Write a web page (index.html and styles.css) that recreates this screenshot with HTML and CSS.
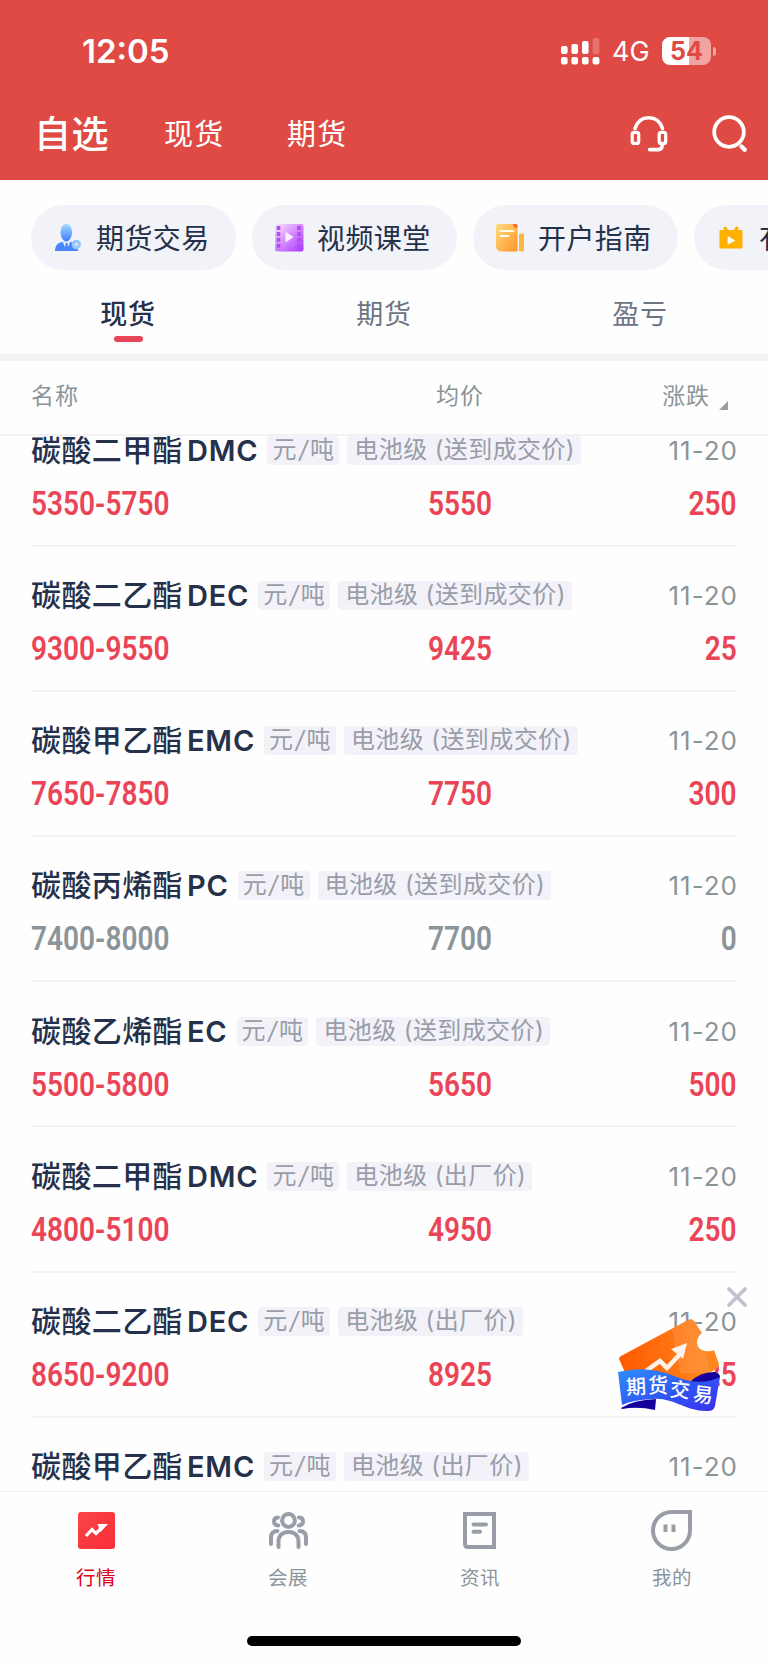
FILE: index.html
```
<!DOCTYPE html>
<html lang="zh-CN">
<head>
  <meta charset="UTF-8" />
  <meta name="viewport" content="width=device-width, initial-scale=1.0"/>
  <title>自选</title>
  <link rel="stylesheet" href="styles.css">
</head>
<body>
  <header class="header">
    <div class="status-bar">
      <div class="time">12:05</div>
      <div class="status-icons">
        <svg class="signal" width="39" height="28" viewBox="0 0 39 28" fill="#fff">
          <rect x="0" y="9" width="6.6" height="8" rx="2"/>
          <rect x="10.4" y="7" width="6.6" height="10" rx="2"/>
          <rect x="21" y="4" width="6.6" height="13" rx="2"/>
          <rect x="31.6" y="1" width="6.8" height="16" rx="2" opacity=".22"/>
          <rect x="0" y="20" width="6.6" height="7.6" rx="2"/>
          <rect x="10.4" y="20" width="6.6" height="7.6" rx="2"/>
          <rect x="21" y="20" width="6.6" height="7.6" rx="2"/>
          <rect x="31.6" y="20" width="6.8" height="7.6" rx="2"/>
        </svg>
        <span class="network">4G</span>
        <span class="battery">54</span>
        <span class="battery-cap"></span>
      </div>
    </div>
    <div class="title-bar">
      <nav class="main-tabs">
        <span class="main-tab active">自选</span>
        <span class="main-tab">现货</span>
        <span class="main-tab">期货</span>
      </nav>
      <div class="header-actions">
        <svg width="40" height="40" viewBox="0 0 40 40" fill="none" stroke="#fff" stroke-width="3.6" stroke-linecap="round">
          <path d="M6 15.5C8.500 8 13.500 4.800 19.700 4.800S31 8 33.500 15.500"/>
          <rect x="3.200" y="19.400" width="6.500" height="11" rx="2" stroke-width="3.200"/>
          <rect x="30.200" y="19.400" width="6.500" height="11" rx="2" stroke-width="3.200"/>
          <path d="M33.200 32c0 3-1.200 4.600-4 4.600H20.500"/>
        </svg>
        <svg width="40" height="40" viewBox="0 0 40 40" fill="none" stroke="#fff" stroke-width="3.8">
          <circle cx="19" cy="19" r="14.800"/>
          <path d="M31.500 33.500l3.200 3.200" stroke-width="4.400" stroke-linecap="round"/>
        </svg>
      </div>
    </div>
  </header>

  <div class="shortcuts">
    <div class="chip">
      <svg width="30" height="30" viewBox="0 0 30 30">
        <defs>
          <linearGradient id="user" x1="0" y1="0" x2="0" y2="1">
            <stop offset="0" stop-color="#a5dcff"/><stop offset="1" stop-color="#3f7cff"/>
          </linearGradient>
        </defs>
        <path d="M2 29c0-6 3-8.500 9-9.500h5c6 1 9 3.500 9 9.500z" fill="#4a86fb"/>
        <path d="M9.500 19.500l4 9 4-9z" fill="#e8f2ff"/>
        <path d="M12.600 21h2l.9 8h-3.800z" fill="#4a86fb"/>
        <ellipse cx="13.300" cy="10.500" rx="5.700" ry="8.700" fill="url(#user)"/>
        <circle cx="23.300" cy="22.500" r="4.700" fill="#90c5ff"/>
        <path d="M23.300 20v5M20.800 22.500h5" stroke="#d8edff" stroke-width="1"/>
      </svg>
      <span>期货交易</span>
    </div>
    <div class="chip">
      <svg width="30" height="30" viewBox="0 0 30 30">
        <defs>
          <linearGradient id="film" x1="0" y1="0" x2="1" y2="1">
            <stop offset="0" stop-color="#f9e6ff"/><stop offset=".5" stop-color="#d488fd"/><stop offset="1" stop-color="#a936fa"/>
          </linearGradient>
        </defs>
        <rect x="1" y="2" width="28.500" height="27.500" rx="2" fill="url(#film)"/>
        <path d="M4.500 4v24M25 4v24" stroke="#b04fee" stroke-width="3.600" stroke-dasharray="4 1.900"/>
        <path d="M11.500 10l8 5-8 5.500z" fill="#fff1ff"/>
      </svg>
      <span>视频课堂</span>
    </div>
    <div class="chip">
      <svg width="30" height="30" viewBox="0 0 30 30">
        <defs>
          <linearGradient id="guide" x1="0" y1="0" x2="1" y2="1">
            <stop offset="0" stop-color="#ffdc80"/><stop offset="1" stop-color="#ff9426"/>
          </linearGradient>
        </defs>
        <rect x="24" y="11.500" width="5" height="18" rx="1.500" fill="#ffb741"/>
        <path d="M3 2h18q1.500 0 1.500 2v25.500H7q-6 0-6-6V4q0-2 2-2z" fill="url(#guide)"/>
        <path d="M18 2h3q1.500 0 1.500 4Q18 6 18 2z" fill="#ef6b3a"/>
        <path d="M5.500 9h13M5.500 14h8" stroke="#fffbe8" stroke-width="2.200" stroke-linecap="round"/>
      </svg>
      <span>开户指南</span>
    </div>
    <div class="chip">
      <svg width="30" height="30" viewBox="0 0 30 30">
        <path d="M8.500 5l3 5M21.500 5l-3 5" stroke="#ffb000" stroke-width="3.400"/>
        <rect x="3.500" y="8" width="23" height="18.500" rx="1" fill="#ffb000"/>
        <path d="M11.700 14l7.600 4.500-7.600 4.300z" fill="#fff"/>
      </svg>
      <span>有</span>
    </div>
  </div>

  <div class="sub-tabs">
    <div class="sub-tab active">现货</div>
    <div class="sub-tab">期货</div>
    <div class="sub-tab">盈亏</div>
  </div>

  <div class="table-head">
    <span>名称</span>
    <span class="avg">均价</span>
    <span class="change">涨跌<i class="sort"></i></span>
  </div>

  <main class="list">
    <div class="rows">
      <div class="row">
        <div class="info"><b class="name">碳酸二甲酯<em>DMC</em></b><span class="tag unit">元<i>/</i>吨</span><span class="tag">电池级 (送到成交价)</span><span class="date">11-20</span></div>
        <div class="prices"><span class="num">5350-5750</span><span class="num mid">5550</span><span class="num end">250</span></div>
      </div>
      <div class="row">
        <div class="info"><b class="name">碳酸二乙酯<em>DEC</em></b><span class="tag unit">元<i>/</i>吨</span><span class="tag">电池级 (送到成交价)</span><span class="date">11-20</span></div>
        <div class="prices"><span class="num">9300-9550</span><span class="num mid">9425</span><span class="num end">25</span></div>
      </div>
      <div class="row">
        <div class="info"><b class="name">碳酸甲乙酯<em>EMC</em></b><span class="tag unit">元<i>/</i>吨</span><span class="tag">电池级 (送到成交价)</span><span class="date">11-20</span></div>
        <div class="prices"><span class="num">7650-7850</span><span class="num mid">7750</span><span class="num end">300</span></div>
      </div>
      <div class="row flat">
        <div class="info"><b class="name">碳酸丙烯酯<em>PC</em></b><span class="tag unit">元<i>/</i>吨</span><span class="tag">电池级 (送到成交价)</span><span class="date">11-20</span></div>
        <div class="prices"><span class="num">7400-8000</span><span class="num mid">7700</span><span class="num end">0</span></div>
      </div>
      <div class="row">
        <div class="info"><b class="name">碳酸乙烯酯<em>EC</em></b><span class="tag unit">元<i>/</i>吨</span><span class="tag">电池级 (送到成交价)</span><span class="date">11-20</span></div>
        <div class="prices"><span class="num">5500-5800</span><span class="num mid">5650</span><span class="num end">500</span></div>
      </div>
      <div class="row">
        <div class="info"><b class="name">碳酸二甲酯<em>DMC</em></b><span class="tag unit">元<i>/</i>吨</span><span class="tag">电池级 (出厂价)</span><span class="date">11-20</span></div>
        <div class="prices"><span class="num">4800-5100</span><span class="num mid">4950</span><span class="num end">250</span></div>
      </div>
      <div class="row">
        <div class="info"><b class="name">碳酸二乙酯<em>DEC</em></b><span class="tag unit">元<i>/</i>吨</span><span class="tag">电池级 (出厂价)</span><span class="date">11-20</span></div>
        <div class="prices"><span class="num">8650-9200</span><span class="num mid">8925</span><span class="num end">25</span></div>
      </div>
      <div class="row">
        <div class="info"><b class="name">碳酸甲乙酯<em>EMC</em></b><span class="tag unit">元<i>/</i>吨</span><span class="tag">电池级 (出厂价)</span><span class="date">11-20</span></div>
      </div>
    </div>
  </main>

  <!-- floating promo -->
  <div class="promo">
    <svg width="134" height="134" viewBox="0 0 134 134">
      <defs>
        <linearGradient id="ticket" x1="0" y1="0" x2="1" y2="0">
          <stop offset="0" stop-color="#ff5a00"/><stop offset="1" stop-color="#ff8b22"/>
        </linearGradient>
        <linearGradient id="ribbon" x1="0" y1="0" x2="1" y2="1">
          <stop offset="0" stop-color="#2f8dfa"/><stop offset=".55" stop-color="#2f56f4"/><stop offset="1" stop-color="#3a2ff0"/>
        </linearGradient>
      </defs>
      <path d="M111 8l16 16M127 8l-16 16" stroke="#bfc3ce" stroke-width="3.800" stroke-linecap="round"/>
      <path d="M2 80Q-.5 77 3 75L70 39Q74 37 76 40L84 52C76 58 78 69 87 70Q93 71 96 69L101 83Q101 86 98 88L76 101 8 94z" fill="url(#ticket)"/>
      <path d="M54 48L70 39Q74 37 76 40L84 52C76 58 78 69 87 70L92 92H62z" fill="#fff" opacity=".1"/>
      <path d="M28 90l14-10 7 7 14-15" fill="none" stroke="#fff2e8" stroke-width="4.500"/>
      <path d="M69 62l-16 6 12 10z" fill="#fff2e8"/>
      <path d="M72 101Q82 91 96 91q6 1 6 5L98 105z" fill="#14009a"/>
      <path d="M3 127q12-8 35-9l-1 11q-17-4-33-1z" fill="#14009a"/>
      <path d="M0 91Q30 84 56 95T102 96L97 125Q96 130 90 130C68 131 55 116 35 118Q14 119 4 124z" fill="url(#ribbon)"/>
      <g class="promo-text">
        <text x="8" y="113" transform="rotate(-3 18 106)">期</text>
        <text x="30" y="112">货</text>
        <text x="52" y="116" transform="rotate(6 62 108)">交</text>
        <text x="75" y="121" transform="rotate(7 85 114)">易</text>
      </g>
    </svg>
  </div>

  <footer class="tab-bar">
    <div class="tab-item active">
      <svg width="44" height="44" viewBox="0 0 44 44">
        <defs>
          <linearGradient id="market" x1="0" y1="0" x2="1" y2="1">
            <stop offset="0" stop-color="#fa4646"/><stop offset="1" stop-color="#f82c38"/>
          </linearGradient>
        </defs>
        <rect x="4" y="4" width="37" height="37" rx="3" fill="url(#market)"/>
        <path d="M12 28l6-6.500 4 4 7-7" fill="none" stroke="#fff" stroke-width="3.200"/>
        <path d="M23.500 16H34L26.500 24z" fill="#fff"/>
      </svg>
      <span>行情</span>
    </div>
    <div class="tab-item">
      <svg width="44" height="44" viewBox="0 0 44 44" fill="none" stroke="#999da8" stroke-width="4" stroke-linecap="round">
        <circle cx="22.500" cy="12.500" r="6.400"/>
        <path d="M12.500 39V34c0-6.500 4-10 10-10s10 3.500 10 10v5"/>
        <path d="M12 9.500c-3 0-4 1.800-4 4s1.500 4 4.300 4M33 9.500c3 0 4 1.800 4 4s-1.500 4-4.300 4"/>
        <path d="M11.500 23C6.500 23 5 26 5 29.500V36M33.500 23c5 0 6.500 3 6.500 6.500V36"/>
      </svg>
      <span>会展</span>
    </div>
    <div class="tab-item">
      <svg width="44" height="44" viewBox="0 0 44 44" fill="none" stroke="#999da8" stroke-width="4">
        <path d="M7 6h29v33H10q-3 0-3-3z"/>
        <path d="M15.500 16.500h12.500M15.500 23.800h6.500" stroke-linecap="round"/>
      </svg>
      <span>资讯</span>
    </div>
    <div class="tab-item">
      <svg width="44" height="44" viewBox="0 0 44 44" fill="none" stroke="#999da8" stroke-width="4">
        <path d="M21.500 4H40v18.500A18.500 18.500 0 1 1 21.500 4z"/>
        <path d="M15.500 16.500v7.500M23.500 16.500v7.500"/>
      </svg>
      <span>我的</span>
    </div>
  </footer>
  <div class="home-indicator"></div>
</body>
</html>
```
FILE: styles.css
```
* {
  box-sizing: border-box;
}

body {
  margin: 0;
  width: 768px;
  height: 1663px;
  overflow: hidden;
  position: relative;
  display: flex;
  flex-direction: column;
  background: #fefefe;
  color: #25314a;
  font-family: Inter, "Noto Sans CJK SC", sans-serif;
}

svg {
  display: block;
  flex: none;
}

/* Header */
.header {
  height: 180px;
  flex: none;
  background: #df4a44;
  color: #fff;
}

.status-bar {
  height: 102px;
  padding: 0 52px 0 82px;
  display: flex;
  align-items: center;
  justify-content: space-between;
}

.time {
  font-size: 33px;
  font-weight: 600;
}

.status-icons {
  display: flex;
  align-items: center;
}

.network {
  margin-left: 12px;
  width: 50px;
  font-size: 27px;
}

.battery {
  width: 49px;
  height: 28px;
  border-radius: 8px;
  background: linear-gradient(90deg, #fff 55%, #f1a4a1 55%);
  color: #df4a44;
  font-size: 25px;
  font-weight: 700;
  line-height: 28px;
  text-align: center;
}

.battery-cap {
  width: 3px;
  height: 9px;
  margin-left: 2px;
  border-radius: 0 4px 4px 0;
  background: #f1a4a1;
}

.title-bar {
  height: 62px;
  padding: 0 18px 0 34px;
  display: flex;
  align-items: center;
  justify-content: space-between;
}

.main-tabs {
  display: flex;
  align-items: center;
  padding-bottom: 3px;
}

.main-tab {
  width: 123px;
  font-size: 29px;
  letter-spacing: 1.3px;
}

.main-tab.active {
  width: 130px;
  font-size: 37px;
  font-weight: 500;
  letter-spacing: 0.6px;
}

.header-actions {
  display: flex;
  gap: 41px;
}

/* Shortcut chips */
.shortcuts {
  height: 90px;
  flex: none;
  padding: 25px 0 0 31px;
  display: flex;
  gap: 16px;
  overflow: hidden;
}

.chip {
  width: 205px;
  height: 65px;
  flex: none;
  padding-left: 22px;
  padding-bottom: 1px;
  display: flex;
  align-items: center;
  gap: 13px;
  border-radius: 33px;
  background: #f2f3f8;
  font-size: 28px;
  letter-spacing: 0.4px;
  white-space: nowrap;
}

/* Sub tabs */
.sub-tabs {
  height: 91px;
  flex: none;
  display: grid;
  grid-template-columns: repeat(3, 1fr);
  border-bottom: 7px solid #f2f2f2;
}

.sub-tab {
  display: flex;
  flex-direction: column;
  align-items: center;
  padding-top: 25px;
  font-size: 27px;
  line-height: 40px;
  letter-spacing: 0.8px;
  color: #6c7584;
}

.sub-tab.active {
  color: #25314a;
  font-weight: 500;
}

.sub-tab.active::after {
  content: "";
  width: 29px;
  height: 6px;
  margin-top: 1px;
  border-radius: 3px;
  background: #ea4457;
}

/* Table */
.table-head {
  height: 75px;
  flex: none;
  padding: 0 31px 7px;
  display: grid;
  grid-template-columns: 405px 1fr auto;
  align-items: center;
  border-bottom: 2px solid #f2f2f2;
  color: #8b9499;
  font-size: 23px;
  letter-spacing: 0.9px;
}

.change {
  display: flex;
  align-items: center;
  padding-right: 9px;
}

.sort {
  margin: 22px 0 0 9px;
  border-left: 9px solid transparent;
  border-bottom: 9px solid #999da8;
}

.list {
  height: 1055px;
  flex: none;
  overflow: hidden;
}

.rows {
  margin-top: -34.6px;
}

.row {
  height: 145.2px;
  margin: 0 31px;
  padding-top: 30px;
  border-bottom: 2px solid #f2f2f2;
}

.info {
  height: 38px;
  margin-bottom: 14px;
  display: flex;
  align-items: center;
}

.name {
  padding-bottom: 5px;
  font-size: 30px;
  font-weight: 500;
  letter-spacing: 0.4px;
}

.name em {
  margin-left: 4px;
  font-style: normal;
  font-size: 29px;
  font-weight: 600;
  letter-spacing: 0.8px;
}

.tag {
  height: 29px;
  margin-left: 8px;
  padding: 0 6px 0 7px;
  border-radius: 4px;
  background: #f2f2f8;
  color: #999da8;
  font-size: 24px;
  line-height: 27px;
  letter-spacing: 0.4px;
  white-space: nowrap;
}

.tag.unit {
  margin-left: 9px;
  padding: 0 5px;
}

.tag i {
  margin: 0 2px;
}

.date {
  margin: 0 -1px 0 auto;
  color: #8b9499;
  font-size: 26px;
  letter-spacing: 1px;
}

.prices {
  height: 40px;
  display: grid;
  grid-template-columns: 397px 1fr auto;
  align-items: center;
  color: #ea4457;
}

.num {
  font-family: Roboto, sans-serif;
  font-size: 33px;
  font-weight: 600;
  transform: scaleX(0.85);
  transform-origin: left center;
}

.num.end {
  transform-origin: right center;
}

.flat .prices {
  color: #8b9499;
}

/* Floating promo */
.promo {
  position: absolute;
  left: 618px;
  top: 1281px;
}

.promo-text {
  fill: #fff;
  font-size: 20px;
  font-weight: 500;
}

/* Bottom bar */
.tab-bar {
  height: 145px;
  flex: none;
  padding-top: 16px;
  display: grid;
  grid-template-columns: repeat(4, 1fr);
  border-top: 1px solid #f2f2f4;
  color: #8b9499;
}

.tab-item {
  display: flex;
  flex-direction: column;
  align-items: center;
  font-size: 19.5px;
  line-height: 30px;
  letter-spacing: 0.5px;
  gap: 11px;
}

.tab-item.active {
  color: #dc0018;
}

.home-indicator {
  width: 274px;
  height: 10px;
  flex: none;
  align-self: center;
  border-radius: 5px;
  background: #000;
}
```
